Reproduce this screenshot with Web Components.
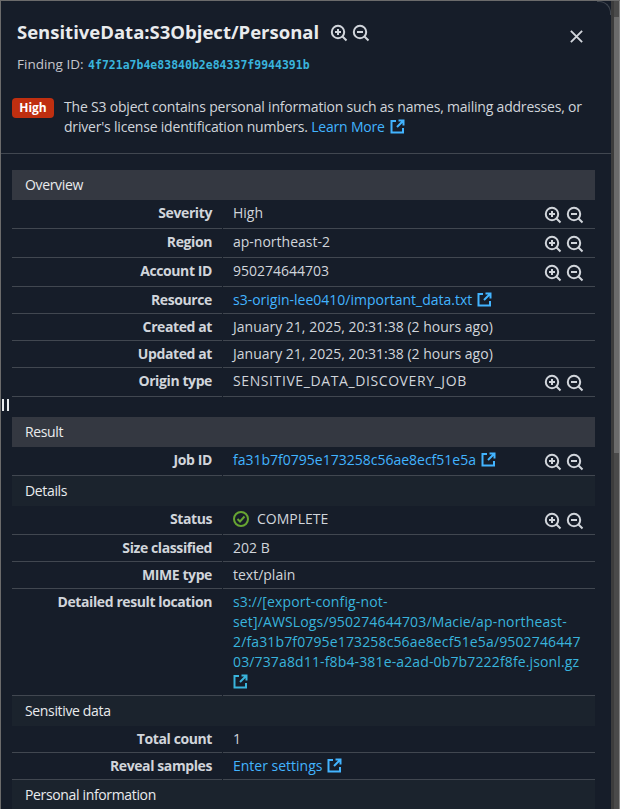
<!DOCTYPE html>
<html>
<head>
<meta charset="utf-8">
<title>Finding</title>
<style>
  html, body { margin: 0; height: 100%; background: #161d29; overflow: hidden; }
  body { font: 14px/20px "Open Sans", "Noto Sans", sans-serif; color: #d1d5db; }
</style>
</head>
<body>
<template id="zoom-tpl">
  <style>
    :host { display: inline-flex; gap: 4px; color: #d1d5db; }
    svg { width: 18px; height: 18px; fill: none; stroke: currentColor; stroke-width: 2; }
  </style>
  <svg viewBox="0 0 18 18"><circle cx="8" cy="8" r="6.2"/><path d="M12.5 12.5 16.5 16.5M5 8h6M8 5v6"/></svg>
  <svg viewBox="0 0 18 18"><circle cx="8" cy="8" r="6.2"/><path d="M12.5 12.5 16.5 16.5M5 8h6"/></svg>
</template>

<script>
function fromTemplate(el, id) {
  el.attachShadow({ mode: "open" });
  el.shadowRoot.appendChild(document.getElementById(id).content.cloneNode(true));
}

class ZoomActions extends HTMLElement {
  connectedCallback() {
    fromTemplate(this, "zoom-tpl");
  }
}

class ExtLink extends HTMLElement {
  connectedCallback() {
    this.attachShadow({ mode: "open" });
    this.shadowRoot.innerHTML = `
      <style>
        :host { display: inline; color: var(--link, #42b4ff); }
        svg { width: 15px; height: 15px; margin-left: var(--icon-gap, 5px); vertical-align: -2px; fill: none; stroke: currentColor; stroke-width: 2; }
      </style>
      <slot></slot><svg viewBox="0 0 15 15"><path d="M6 2H1.500v11.500H13V9M8.500 1.500h5v5M13.500 1.500 7 8"/></svg>
    `;
  }
}

class SectionHead extends HTMLElement {
  connectedCallback() {
    this.attachShadow({ mode: "open" });
    this.shadowRoot.innerHTML = `
      <style>
        :host { display: block; height: 30px; line-height: 30px; padding-left: 13px; letter-spacing: -.35px; background: #1b232d; color: #e9ebed; }
        :host([main]) { background: #343841; }
      </style>
      <slot></slot>
    `;
  }
}

class DetailRow extends HTMLElement {
  connectedCallback() {
    this.attachShadow({ mode: "open" });
    this.shadowRoot.innerHTML = `
      <style>
        :host { display: grid; grid-template-columns: 210px 1fr; column-gap: 1px; }
        .key, .val { border-bottom: 1px solid #414750; }
        .key { padding: 3px 10px 3px 0; text-align: right; font-weight: 700; letter-spacing: -.4px; color: #d1d5db; }
        .val { display: flex; justify-content: space-between; padding: 3px 11px 3px 10px; }
        .text { min-width: 0; overflow-wrap: anywhere; }
        ::slotted(zoom-actions) { margin: 3px 0 1px; }
      </style>
      <div class="key"><slot name="key"></slot></div>
      <div class="val"><div class="text"><slot></slot></div><slot name="actions"></slot></div>
    `;
  }
}

class FindingHeader extends HTMLElement {
  connectedCallback() {
    this.attachShadow({ mode: "open" });
    this.shadowRoot.innerHTML = `
      <style>
        :host { display: block; border-bottom: 1px solid #414750; height: 153px; box-sizing: border-box; }
        .top { display: flex; align-items: center; padding: 18px 27px 0 16px; height: 26px; }
        h1 { margin: 0; font-size: 18.5px; line-height: 26px; font-weight: 700; color: #e9ebed; }
        zoom-actions { margin-left: 11px; margin-top: 2px; }
        .close { margin-left: auto; margin-top: 8px; width: 15px; height: 15px; fill: none; stroke: #d1d5db; stroke-width: 2; }
        .id { padding: 9px 16px 0; font-size: 13.5px; line-height: 20px; color: #c6c6cd; }
        .id span { color: #39b4dc; font-family: "DejaVu Sans Mono", monospace; font-size: 11.5px; font-weight: 700; margin-left: 1px; }
        .desc { display: flex; gap: 10px; padding: 22px 24px 0 11px; letter-spacing: -.2px; }
        .desc p { margin: 0; }
        .badge { flex: none; align-self: flex-start; margin-top: 1px; width: 42px; height: 20px; line-height: 20px; text-align: center; border-radius: 4px; background: #bf2f10; color: #fff; font-size: 12px; font-weight: 700; letter-spacing: 0; }
      </style>
      <div class="top">
        <h1>SensitiveData:S3Object/Personal</h1>
        <zoom-actions></zoom-actions>
        <svg class="close" viewBox="0 0 16 16"><path d="M2 2 14 14M14 2 2 14"/></svg>
      </div>
      <div class="id">Finding ID: <span>4f721a7b4e83840b2e84337f9944391b</span></div>
      <div class="desc">
        <div class="badge">High</div>
        <div>
          <p>The S3 object contains personal information such as names, mailing addresses, or</p>
          <p><span>driver's license identification numbers.</span> <ext-link>Learn More</ext-link></p>
        </div>
      </div>
    `;
  }
}

class PanelScrollbar extends HTMLElement {
  connectedCallback() {
    this.attachShadow({ mode: "open" });
    this.shadowRoot.innerHTML = `
      <style>
        :host { display: block; width: 9px; box-sizing: border-box; background: #4a4a4a; border-left: 3px solid #3c3c3c; border-right: 1px solid #858585; }
        .thumb { margin-top: 16px; height: 436px; background: #6b6b6b; }
      </style>
      <div class="thumb"></div>
    `;
  }
}

class FindingPanel extends HTMLElement {
  connectedCallback() {
    this.attachShadow({ mode: "open" });
    this.shadowRoot.innerHTML = `
      <style>
        :host { display: flex; height: 809px; box-sizing: border-box; border-top: 1px solid #6b6b6b; border-left: 1px solid #6b6b6b; position: relative; overflow: hidden; }
        .main { flex: 1; min-width: 0; overflow: hidden; background: #161d29; }
        .body { padding: 16px 16px 0 11px; }
        .corner { position: absolute; top: 0; right: 9px; width: 14px; height: 14px; box-sizing: border-box; border-top: 1px solid #414750; border-right: 1px solid #414750; border-top-right-radius: 12px; }
        .grip { position: absolute; left: 1px; top: 398px; width: 7px; height: 12px; box-sizing: border-box; border-left: 2px solid #e9ebed; border-right: 2px solid #e9ebed; }
      </style>
      <div class="main">
        <finding-header></finding-header>
        <div class="body"><slot></slot></div>
      </div>
      <panel-scrollbar></panel-scrollbar>
      <div class="corner"></div>
      <div class="grip"></div>
    `;
  }
}

customElements.define("zoom-actions", ZoomActions);
customElements.define("ext-link", ExtLink);
customElements.define("section-head", SectionHead);
customElements.define("detail-row", DetailRow);
customElements.define("finding-header", FindingHeader);
customElements.define("panel-scrollbar", PanelScrollbar);
customElements.define("finding-panel", FindingPanel);
</script>

<finding-panel>
  <section-head main>Overview</section-head>
  <detail-row><span slot="key">Severity</span>High<zoom-actions slot="actions"></zoom-actions></detail-row>
  <detail-row><span slot="key">Region</span>ap-northeast-2<zoom-actions slot="actions"></zoom-actions></detail-row>
  <detail-row><span slot="key">Account ID</span>950274644703<zoom-actions slot="actions"></zoom-actions></detail-row>
  <detail-row><span slot="key">Resource</span><ext-link>s3-origin-lee0410/important_data.txt</ext-link></detail-row>
  <detail-row><span slot="key">Created at</span>January 21, 2025, 20:31:38 (2 hours ago)</detail-row>
  <detail-row><span slot="key">Updated at</span>January 21, 2025, 20:31:38 (2 hours ago)</detail-row>
  <detail-row><span slot="key">Origin type</span><span style="letter-spacing:.6px">SENSITIVE_DATA_DISCOVERY_JOB</span><zoom-actions slot="actions"></zoom-actions></detail-row>
  <div style="height:20px"></div>
  <section-head main>Result</section-head>
  <detail-row><span slot="key">Job ID</span><ext-link>fa31b7f0795e173258c56ae8ecf51e5a</ext-link><zoom-actions slot="actions"></zoom-actions></detail-row>
  <section-head>Details</section-head>
  <detail-row><span slot="key">Status</span><svg width="16" height="16" viewBox="0 0 16 16" fill="none" stroke="#67a532" stroke-width="2" style="vertical-align:-3px;margin-right:8px"><circle cx="8" cy="8" r="7"/><path d="M4.500 8 7 10.500 11.500 5.500"/></svg>COMPLETE<zoom-actions slot="actions"></zoom-actions></detail-row>
  <detail-row><span slot="key">Size classified</span>202 B</detail-row>
  <detail-row><span slot="key">MIME type</span>text/plain</detail-row>
  <detail-row><span slot="key">Detailed result location</span><ext-link style="--link:#39b4dc;--icon-gap:0;letter-spacing:.14px">s3://[export-config-not-set]/AWSLogs/950274644703/Macie/ap-northeast-2/fa31b7f0795e173258c56ae8ecf51e5a/950274644703/737a8d11-f8b4-381e-a2ad-0b7b7222f8fe.jsonl.gz</ext-link></detail-row>
  <section-head>Sensitive data</section-head>
  <detail-row><span slot="key">Total count</span>1</detail-row>
  <detail-row><span slot="key">Reveal samples</span><ext-link>Enter settings</ext-link></detail-row>
  <section-head>Personal information</section-head>
</finding-panel>
</body>
</html>
